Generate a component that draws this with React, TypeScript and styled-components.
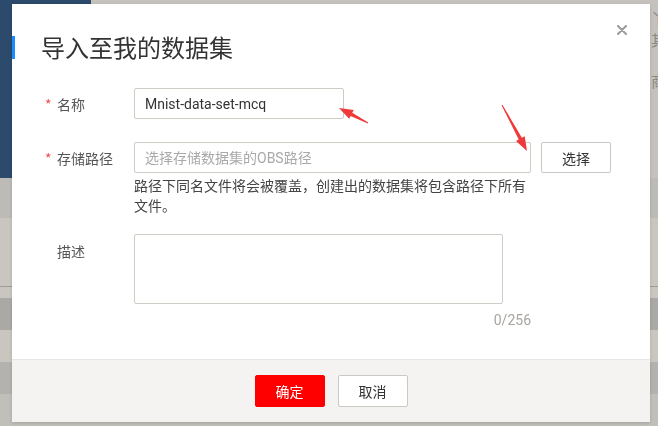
import React from 'react'
import styled, { createGlobalStyle } from 'styled-components'

const GlobalStyle = createGlobalStyle`
  html, body {
    margin: 0;
    padding: 0;
    width: 658px;
    height: 426px;
    overflow: hidden;
    background: #c5c2bd;
    font-family: "Noto Sans CJK SC", "Noto Sans", sans-serif;
  }
  * { box-sizing: border-box; }
`

const FONT = `"Roboto", "Noto Sans CJK SC", sans-serif`

// ---------- dimmed page behind the modal ----------

const Backdrop = styled.div`
  width: 658px;
  height: 426px;
  display: flex;
  flex-direction: column;
  overflow: hidden;
`

const TopArea = styled.div`
  height: 178px;
  display: flex;
`

const NavyBlock = styled.div`
  width: 91px;
  background: #2c4a6b;
`

const Filler = styled.div`
  flex: 1;
  background: #c5c2bd;
`

const Peek = styled.div`
  width: 8px;
  padding: 7px 0 0 1px;
  background: #c5c2bd;
  color: #8a8883;
  font-size: 15px;
  line-height: 22px;
  display: flex;
  flex-direction: column;
  white-space: nowrap;
  overflow: hidden;
`

const PeekLine = styled.span<{ $gap?: number }>`
  display: block;
  margin-top: ${p => p.$gap ?? 0}px;
`

const Stripe = styled.div<{ $h: number; $bg: string; $line?: boolean }>`
  height: ${p => p.$h}px;
  flex-shrink: 0;
  background: ${p => p.$bg};
  border-bottom: ${p => (p.$line ? '1px solid #9e9c98' : 'none')};
`

// ---------- modal ----------

const Dialog = styled.div`
  position: fixed;
  left: 12px;
  top: 4px;
  width: 638px;
  height: 418px;
  background: #fff;
  display: flex;
  flex-direction: column;
  box-shadow: 0 1px 3px rgba(0, 0, 0, 0.15);
`

const Header = styled.div`
  display: flex;
  align-items: flex-start;
  padding-right: 23px;
`

const TitleWrap = styled.div`
  flex: 1;
  display: flex;
  align-items: center;
  margin-top: 28px;
  height: 30px;
`

const Accent = styled.div`
  width: 3px;
  height: 23px;
  background: #1a8cff;
`

const Title = styled.h2`
  margin: 0 0 0 26px;
  font-size: 24px;
  line-height: 30px;
  font-weight: 400;
  color: #333;
`

const Close = styled.button`
  margin-top: 21px;
  width: 10px;
  height: 10px;
  padding: 0;
  border: none;
  background: none;
  display: flex;
`

const Body = styled.div`
  flex: 1;
  padding-top: 26px;
  display: flex;
  flex-direction: column;
`

const Row = styled.div<{ $gap?: number }>`
  display: flex;
  margin-top: ${p => p.$gap ?? 0}px;
`

const Label = styled.div<{ $top?: boolean }>`
  width: 122px;
  flex-shrink: 0;
  padding-left: 33px;
  display: flex;
  align-items: ${p => (p.$top ? 'flex-start' : 'center')};
  padding-top: ${p => (p.$top ? 7 : 0)}px;
  height: ${p => (p.$top ? 'auto' : '31px')};
  font-size: 14px;
  line-height: 20px;
  color: #555;
`

const Star = styled.span<{ $show: boolean }>`
  width: 12px;
  color: #f0484e;
  font-size: 14px;
  visibility: ${p => (p.$show ? 'visible' : 'hidden')};
`

const Field = styled.div`
  display: flex;
  flex-direction: column;
`

const Inline = styled.div`
  display: flex;
  align-items: center;
`

const Input = styled.input<{ $w: number }>`
  width: ${p => p.$w}px;
  height: 31px;
  border: 1px solid #cfcbc5;
  border-radius: 2px;
  padding: 0 10px;
  font-family: ${FONT};
  font-size: 14px;
  color: #333;
  outline: none;

  &::placeholder { color: #a9a9a9; }
`

const TextArea = styled.textarea`
  width: 369px;
  height: 70px;
  border: 1px solid #cfcbc5;
  border-radius: 2px;
  resize: none;
  outline: none;
  font-family: ${FONT};
`

const Hint = styled.div`
  width: 397px;
  margin-top: 2px;
  font-size: 14px;
  line-height: 20px;
  color: #444;
`

const Counter = styled.div`
  width: 397px;
  margin-top: 6px;
  text-align: right;
  font-family: ${FONT};
  font-size: 14px;
  line-height: 20px;
  color: #a8a4a0;
`

const Button = styled.button<{ $primary?: boolean }>`
  width: 70px;
  height: 32px;
  border-radius: 2px;
  font-family: ${FONT};
  font-size: 14px;
  cursor: pointer;
  border: 1px solid ${p => (p.$primary ? '#ff0000' : '#cbc8c3')};
  background: ${p => (p.$primary ? '#ff0000' : '#fff')};
  color: ${p => (p.$primary ? '#fff' : '#333')};
`

const SideButton = styled(Button)`
  margin-left: 10px;
  height: 31px;
`

const Footer = styled.div`
  height: 63px;
  background: #f4f3f1;
  border-top: 1px solid #e8e7e4;
  display: flex;
  justify-content: center;
  align-items: flex-start;
  padding-top: 15px;
  gap: 13px;
`

// ---------- red annotation arrows ----------

const Annotations = styled.svg`
  position: fixed;
  left: 0;
  top: 0;
  pointer-events: none;
`

function arrowPoints(tx: number, ty: number, px: number, py: number) {
  const dx = px - tx
  const dy = py - ty
  const len = Math.hypot(dx, dy)
  const ux = dx / len
  const uy = dy / len
  const nx = -uy
  const ny = ux
  const bx = px - ux * 14
  const by = py - uy * 14
  const pts: [number, number][] = [
    [tx + nx * 0.5, ty + ny * 0.5],
    [bx + nx * 1.8, by + ny * 1.8],
    [bx + nx * 5, by + ny * 5],
    [px, py],
    [bx - nx * 5, by - ny * 5],
    [bx - nx * 1.8, by - ny * 1.8],
    [tx - nx * 0.5, ty - ny * 0.5],
  ]
  return pts.map(p => p.join(',')).join(' ')
}

export default function App() {
  return (
    <>
      <GlobalStyle />
      <Backdrop>
        <TopArea>
          <NavyBlock />
          <Filler />
          <Peek>
            <PeekLine>丫</PeekLine>
            <PeekLine>其</PeekLine>
            <PeekLine $gap={19}>商</PeekLine>
          </Peek>
        </TopArea>
        <Stripe $h={40} $bg="#bdbbb6" />
        <Stripe $h={69} $bg="#c9c6c0" $line />
        <Stripe $h={11} $bg="#c9c6c0" />
        <Stripe $h={32} $bg="#aaa9a5" />
        <Stripe $h={32} $bg="#c9c6c0" />
        <Stripe $h={32} $bg="#b3b2ae" />
        <Stripe $h={32} $bg="#c1bfba" />
      </Backdrop>

      <Dialog>
        <Header>
          <TitleWrap>
            <Accent />
            <Title>导入至我的数据集</Title>
          </TitleWrap>
          <Close aria-label="关闭">
            <svg width="10" height="10" viewBox="0 0 10 10">
              <path d="M1 1 L9 9 M9 1 L1 9" stroke="#9a9a9a" strokeWidth="2" strokeLinecap="round" />
            </svg>
          </Close>
        </Header>

        <Body>
          <Row>
            <Label><Star $show>*</Star>名称</Label>
            <Input $w={210} defaultValue="Mnist-data-set-mcq" />
          </Row>

          <Row $gap={23}>
            <Label><Star $show>*</Star>存储路径</Label>
            <Field>
              <Inline>
                <Input $w={397} placeholder="选择存储数据集的OBS路径" />
                <SideButton>选择</SideButton>
              </Inline>
              <Hint>路径下同名文件将会被覆盖，创建出的数据集将包含路径下所有文件。</Hint>
            </Field>
          </Row>

          <Row $gap={19}>
            <Label $top><Star $show={false}>*</Star>描述</Label>
            <Field>
              <TextArea />
              <Counter>0/256</Counter>
            </Field>
          </Row>
        </Body>

        <Footer>
          <Button $primary>确定</Button>
          <Button>取消</Button>
        </Footer>
      </Dialog>

      <Annotations width="658" height="426" viewBox="0 0 658 426">
        <polygon points={arrowPoints(368, 123, 339, 108)} fill="#ef3a3a" />
        <polygon points={arrowPoints(502, 105, 527, 151)} fill="#ef3a3a" />
      </Annotations>
    </>
  )
}
